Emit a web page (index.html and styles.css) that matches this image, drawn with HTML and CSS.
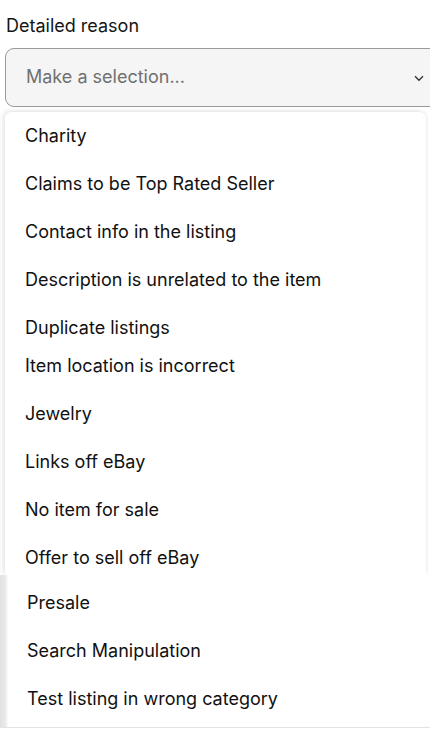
FILE: index.html
```html
<!DOCTYPE html>
<html lang="en">
<head>
<meta charset="utf-8">
<link rel="stylesheet" href="styles.css">
</head>
<body>
<div class="page">
  <div class="field-label">Detailed reason</div>
  <div class="select">
    <span class="placeholder">Make a selection...</span>
    <svg class="chev" width="10" height="7" viewBox="0 0 10 7"><path d="M1 1.2 L5 5.2 L9 1.2" fill="none" stroke="#333" stroke-width="1.4"/></svg>
  </div>
  <div class="menu menu-top">
    <div class="opt">Charity</div>
    <div class="opt">Claims to be Top Rated Seller</div>
    <div class="opt">Contact info in the listing</div>
    <div class="opt">Description is unrelated to the item</div>
    <div class="opt opt-short">Duplicate listings</div>
    <div class="opt">Item location is incorrect</div>
    <div class="opt">Jewelry</div>
    <div class="opt">Links off eBay</div>
    <div class="opt">No item for sale</div>
    <div class="opt">Offer to sell off eBay</div>
  </div>
  <div class="menu-bottom">
    <div class="opt">Presale</div>
    <div class="opt">Search Manipulation</div>
    <div class="opt">Test listing in wrong category</div>
  </div>
  <div class="foot"></div>
</div>
</body>
</html>
```
FILE: styles.css
```css
html, body {
  margin: 0;
  padding: 0;
  background: #fff;
  overflow: hidden;
}
body {
  font-family: Inter, "Open Sans", sans-serif;
  color: #111;
}
.page {
  width: 430px;
  height: 737px;
  display: flex;
  flex-direction: column;
  overflow: hidden;
}
.field-label {
  font-size: 18px;
  line-height: 22px;
  padding: 15px 0 0 6px;
  height: 32px;
  box-sizing: border-box;
  color: #151515;
}
.select {
  margin: 16px -10px 0 5px;
  height: 59px;
  box-sizing: border-box;
  border: 1px solid #9a9a9a;
  border-radius: 9px;
  background: #f5f5f5;
  display: flex;
  align-items: center;
  padding: 0 0 3px 20px;
  position: relative;
}
.placeholder {
  font-size: 18px;
  color: #707070;
  flex: 1;
}
.chev {
  margin-right: 15px;
  margin-top: 4px;
}
.menu-top {
  margin: 5px 4px 0 5px;
  height: 463px;
  overflow: hidden;
  background: #fff;
  border-radius: 6px 6px 0 0;
  box-shadow: -2px -1px 5px rgba(0,0,0,0.10), 1px 0 3px rgba(0,0,0,0.06);
  padding-left: 20px;
  flex: none;
}
.opt {
  height: 48px;
  line-height: 48px;
  font-size: 18px;
  color: #111;
  white-space: nowrap;
}
.opt-short {
  height: 38px;
}
.menu-bottom {
  height: 152px;
  box-sizing: border-box;
  padding: 4px 0 4px 27px;
  background: linear-gradient(to right, #e2e2e2 0, #e9e9e9 5px, #f4f4f4 7px, #fff 8px);
  flex: none;
}
.foot {
  border-top: 1px solid #e3e3e3;
  flex: 1;
  background: #fff;
}
```
